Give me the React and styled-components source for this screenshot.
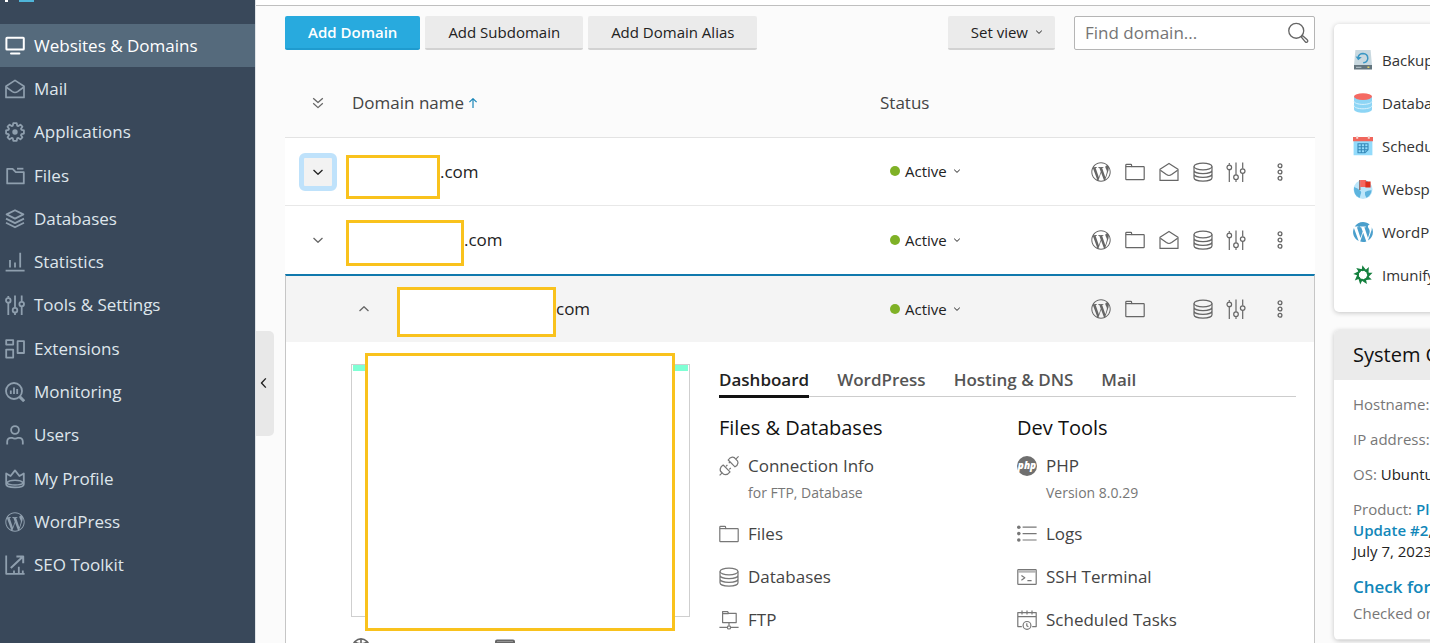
import React from "react";
import styled, { createGlobalStyle, css } from "styled-components";
import { FaWordpressSimple } from "react-icons/fa";

const GlobalStyle = createGlobalStyle`
  *, *::before, *::after { box-sizing: border-box; }
  body {
    margin: 0;
    background: #fbfbfb;
    color: #222;
    font-family: "Open Sans", "Noto Sans", sans-serif;
    font-size: 17px;
    line-height: 20px;
  }
  button, input { font: inherit; color: inherit; }
  button { border: 0; padding: 0; background: none; cursor: pointer; }
  a { color: inherit; text-decoration: none; }
  h2, h3, p, ul { margin: 0; padding: 0; }
  ul { list-style: none; }
  svg { display: block; flex: none; }
`;

/* ---------- icons ---------- */

const Svg = ({ size = 20, stroke = 1.2, children, ...rest }) => (
  <svg
    width={size}
    height={size}
    viewBox="0 0 20 20"
    fill="none"
    stroke="currentColor"
    strokeWidth={stroke}
    strokeLinejoin="round"
    aria-hidden="true"
    {...rest}
  >
    {children}
  </svg>
);

const FlatSvg = ({ children }) => (
  <svg width="20" height="20" viewBox="0 0 20 20" aria-hidden="true">
    {children}
  </svg>
);

const MonitorIcon = () => (
  <Svg stroke="2">
    <rect x="1.4" y="1.8" width="17.4" height="11.8" rx=".6" />
    <path d="M6 17.4h8.4" strokeLinecap="round" />
  </Svg>
);
const MailOpenIcon = ({ bold }) => (
  <Svg stroke={bold ? 1.7 : 1.2}>
    <path d="M1 7.2 10 1.4l9 5.8v11.2H1z" />
    <path d="m1.4 8.2 6 4.4q2.6 1.8 5.2 0l6-4.4" />
  </Svg>
);
const GearIcon = () => (
  <Svg stroke="1.8">
    <path d="M8.3 1.2h3.4l.5 2.4 1.1.5 2.1-1.4 2 2-1.4 2.1.5 1.1 2.4.5v3.2l-2.4.5-.5 1.1 1.4 2.1-2 2-2.1-1.4-1.1.5-.5 2.4H8.3l-.5-2.4-1.1-.5-2.1 1.4-2-2L4 13.2l-.5-1.1-2.4-.5V8.4l2.4-.5L4 6.8 2.6 4.7l2-2 2.1 1.4 1.1-.5z" />
    <circle cx="10" cy="10" r="1.8" fill="currentColor" />
  </Svg>
);
const FilesNavIcon = () => (
  <Svg stroke="1.8">
    <path d="M2.2 17.4V2.8h5.4l3.2 3.4h8v11.2z" />
    <path d="M12 2.7h6.4" />
  </Svg>
);
const LayersIcon = () => (
  <Svg stroke="1.8">
    <path d="m10 1.2 8.4 4.2L10 9.6 1.6 5.4z" />
    <path d="m1 9.6 9 4.5 9-4.5M1 13.8l9 4.5 9-4.5" />
  </Svg>
);
const StatsIcon = () => (
  <Svg stroke="1.8">
    <path d="M.6 18.6h19M5 15.6V8M10 15.6v-5M15.2 15.6V.8" />
  </Svg>
);
const SlidersIcon = ({ bold }) => (
  <Svg stroke={bold ? 1.8 : 1.2}>
    <path d="M3.3 1v1.8M3.3 8v12M10 .6v12.2M10 17.6V20M16.7 .6v6M16.7 11.6V20" />
    <circle cx="3.3" cy="5.4" r="2.3" />
    <circle cx="10" cy="15.2" r="2.3" />
    <circle cx="16.7" cy="9.1" r="2.3" />
  </Svg>
);
const ExtensionsIcon = () => (
  <Svg stroke="1.8">
    <rect x="1.2" y="1.2" width="7" height="4.4" />
    <rect x="1.2" y="10.6" width="7" height="8" />
    <rect x="12.6" y="2.2" width="6.4" height="11.8" />
  </Svg>
);
const MonitoringIcon = () => (
  <Svg stroke="1.8">
    <circle cx="9" cy="9" r="8" />
    <path d="M5.8 12V8.6M9 12V5.4M12.2 12V7" />
    <path d="m14.6 14.6 4.6 4.6" strokeWidth="3" />
  </Svg>
);
const UserIcon = () => (
  <Svg stroke="1.8">
    <circle cx="10" cy="5" r="3.9" />
    <path d="M2.2 19.6v-2.8q0-4 3.8-4h1q3 1.6 6 0h1q3.8 0 3.8 4v2.8" />
  </Svg>
);
const CrownIcon = () => (
  <Svg stroke="1.8">
    <path d="M1.2 4.4 5.6 7 10 1.4 14.4 7l4.4-2.6v10.8q0 3.2-8.8 3.2t-8.8-3.2z" />
    <path d="M1.6 14q2-2.8 8.4-2.8t8.4 2.8q-2 2-8.4 2T1.6 14z" strokeWidth="1.5" />
  </Svg>
);
const SeoIcon = () => (
  <Svg stroke="1.8">
    <path d="M1.2 .6v18.2h18.4" />
    <path d="M5.8 13 18 1.6M11.4 1.4h6.8v6.8" strokeWidth="2" />
    <path d="M9 18.4v-2.8M13.8 18.4v-6.6M17.8 18.4v-3" />
  </Svg>
);
const FolderIcon = () => (
  <Svg>
    <path d="M.8 17V3.2q0-.8.8-.8h4.2q.8 0 .8.8v1.4h12q.6 0 .6.6V17q0 .6-.6.6H1.4q-.6 0-.6-.6z" />
    <path d="M.8 4.6h6" />
  </Svg>
);
const DatabaseIcon = () => (
  <Svg>
    <ellipse cx="10" cy="4.5" rx="9" ry="3.3" />
    <path d="M1 4.5v11.3c0 1.9 4 3.3 9 3.3s9-1.4 9-3.3V4.5M1 8.3c0 1.9 4 3.3 9 3.3s9-1.4 9-3.3M1 12c0 1.9 4 3.3 9 3.3s9-1.4 9-3.3" />
  </Svg>
);
const KebabIcon = () => (
  <Svg stroke="1.3">
    <circle cx="10" cy="3.8" r="1.9" />
    <circle cx="10" cy="10" r="1.9" />
    <circle cx="10" cy="16.2" r="1.9" />
  </Svg>
);
const PlugIcon = () => (
  <Svg>
    <path d="m.6 19.4 2.6-2.6M16.8 3.2 19.6 .4M7 10.4l1.4-1.6M10.2 13.4l1.6-1.4M11 6l-1.2 1.2" />
    <path d="M4.2 9 11 15.8q-2 2.8-4.8 2.8-1.6 0-3-1.8Q.8 15.4 1.2 13q.6-2.6 3-4z" />
    <path d="M9.2 4 16 10.8q2.6-1.4 3-4 .2-2-2.2-3.6Q15.4 1 13.2 1.2 10.8 1.4 9.2 4z" />
  </Svg>
);
const FtpIcon = () => (
  <Svg>
    <path d="M3.6 12.6V1.6h5l1 1.8h7.6v9.2zM3.6 3.6h6M.4 17.4h7.8M11.8 17.4h7.8M10 12.6v3" />
    <circle cx="10" cy="17.4" r="1.6" />
  </Svg>
);
const PhpIcon = () => (
  <FlatSvg>
    <circle cx="10" cy="10" r="10" fill="#6f6f6f" />
    <text
      x="10"
      y="13"
      fill="#fff"
      fontFamily="Open Sans, sans-serif"
      fontSize="10"
      fontWeight="800"
      fontStyle="italic"
      textAnchor="middle"
    >
      php
    </text>
  </FlatSvg>
);
const LogsIcon = () => (
  <Svg>
    <path d="M5.6 3.2h14M5.6 9.6h14M5.6 16h14" />
    <g fill="currentColor" stroke="none">
      <circle cx="1.8" cy="3.2" r="1.8" />
      <circle cx="1.8" cy="9.6" r="1.8" />
      <circle cx="1.8" cy="16" r="1.8" />
    </g>
  </Svg>
);
const TerminalIcon = () => (
  <Svg>
    <rect x=".8" y="2.6" width="18.4" height="14.8" rx=".6" />
    <path d="M1 4.5h18" stroke="#b5b5b5" strokeWidth="2.4" />
    <path d="m4.4 8.4 3.4 2.4-3.4 2.4M10.4 13.6h4.2" />
  </Svg>
);
const TasksIcon = () => (
  <Svg>
    <path d="M4.8 16.6H.8V2.6h18.4v14h-4M.8 6.6h18.4M5 .4v4M10 .4v4M15 .4v4" />
    <circle cx="10" cy="15.4" r="3.9" />
    <path d="M9.8 13.2v2.5l1.6 1" />
  </Svg>
);
const SearchIcon = () => (
  <Svg size={22} stroke="1.2">
    <circle cx="8.4" cy="8" r="6.8" />
    <path d="m12.8 13.4 1.2-1.2 4.4 4q1 1.2 0 2-.9.8-1.8-.2z" />
  </Svg>
);
const Chevron = ({ size = 16, stroke = 1.6, d = "m4.4 7.4 5.6 5.4 5.6-5.4" }) => (
  <Svg size={size} stroke={stroke}>
    <path d={d} />
  </Svg>
);
const UP = "m4.4 12.6 5.6-5.4 5.6 5.4";
const LEFT = "M12.6 3.4 6.4 10l6.2 6.6";
const DOUBLE = "m4 4 6 5.4L16 4M4 10.4l6 5.4 6-5.4";
const SortUpIcon = () => (
  <Svg size={12} stroke="2">
    <path d="M10 18.4V3M4 8.6l6-6 6 6" />
  </Svg>
);
const GlobeIcon = () => (
  <Svg size={18} stroke="1.8">
    <circle cx="10" cy="10" r="9" />
    <path d="M3 4q7 5 14 0M10 1v18" />
  </Svg>
);
const WindowIcon = () => (
  <Svg stroke="2">
    <rect x="1" y="2.6" width="18" height="14" rx="1" />
    <path d="M1 4.6h18" />
  </Svg>
);

const BackupIcon = () => (
  <FlatSvg>
    <path d="M2.4 0h15.2L19 15H1z" fill="#c9d9e0" />
    <path d="M1 15h18v4.6H1z" fill="#63757e" />
    <path d="M3 16.8h5.4v1.2H3z" fill="#a9b7be" />
    <path d="M14.4 16.6h2v1.4h-2z" fill="#e5d26b" />
    <path d="M5 7.6q1-4 5-4 4.6.2 4.8 4.6-.2 4-4.6 4.6" fill="none" stroke="#3a97c4" strokeWidth="1.5" />
    <path d="m2.6 6.4 2.6 3.8 3.6-3z" fill="#3a97c4" />
  </FlatSvg>
);
const DbColorIcon = () => (
  <FlatSvg>
    <path d="M1 3.4v12.8c0 2 4 3.6 9 3.6s9-1.6 9-3.6V3.4z" fill="#8dd5f5" />
    <ellipse cx="10" cy="3.6" rx="9" ry="3.3" fill="#f56a63" />
    <path d="M1 8.2c0 1.8 4 3.2 9 3.2s9-1.4 9-3.2M1 12.6c0 1.8 4 3.2 9 3.2s9-1.4 9-3.2" fill="none" stroke="#d9f2fd" />
  </FlatSvg>
);
const CalendarColorIcon = () => (
  <FlatSvg>
    <path d="M.6 4h18.8v15.2H.6z" fill="#93dbfb" />
    <path d="M0 1h20v4.2H0z" fill="#f0665c" />
    <path d="M3.2 0h2v2.8h-2zM14.8 0h2v2.8h-2z" fill="#f7d8d4" />
    <path d="M5 7.8h10v6l-3 3H5zM8.3 7.8v9M11.7 7.8v9M5 10.8h10M5 13.8h10" fill="none" stroke="#3488b8" strokeWidth="1.1" />
  </FlatSvg>
);
const WebspaceColorIcon = () => (
  <FlatSvg>
    <circle cx="10" cy="10.5" r="9.5" fill="#bce6fa" />
    <path d="M1 8q4 1 6 3.6 2 1.6.6 4-.4 2-1 3.4Q.4 16.6 1 8zM12 13q3-2 6.6-1.8-.6 5.2-5.2 7.6-2-3-1.4-5.8zM8 1.4q4-1 7 1.2l-4 2.4z" fill="#5db4de" />
    <path d="M6.8 1v10" stroke="#8b5a55" strokeWidth="1.2" />
    <path d="M7.2 1H13v7H7.2z" fill="#f5665e" />
    <path d="M12.4 2.4h5.2v6.2h-5.2z" fill="#dc2f1e" />
  </FlatSvg>
);
const WordPressColorIcon = () => (
  <svg width="20" height="20" viewBox="42 42 428 428" aria-hidden="true">
    <path
      fill="#4a9fcc"
      d="M61.7 169.4l101.5 278C92.2 413 43.3 340.2 43.3 256c0-30.9 6.6-60.1 18.4-86.6zm337.9 75.9c0-26.3-9.4-44.5-17.5-58.7-10.8-17.5-20.9-32.4-20.9-49.9 0-19.6 14.8-37.8 35.7-37.8.9 0 1.8.1 2.8.2-37.9-34.7-88.3-55.9-143.7-55.9-74.3 0-139.7 38.1-177.8 95.9 5 .2 9.7.3 13.7.3 22.2 0 56.7-2.7 56.7-2.7 11.5-.7 12.8 16.2 1.4 17.5 0 0-11.5 1.3-24.3 2l77.5 230.4L249.8 247l-33.1-90.8c-11.5-.7-22.3-2-22.3-2-11.5-.7-10.1-18.2 1.3-17.5 0 0 35.1 2.7 56 2.7 22.2 0 56.7-2.7 56.7-2.7 11.5-.7 12.8 16.2 1.4 17.5 0 0-11.5 1.3-24.3 2l76.9 228.7 21.2-70.9c9-29.4 16-50.5 16-68.7zm-139.9 29.3l-63.8 185.5c19.1 5.6 39.2 8.7 60.1 8.7 24.8 0 48.5-4.3 70.6-12.1-.6-.9-1.1-1.9-1.5-2.9l-65.4-179.2zm183-120.7c.9 6.8 1.4 14 1.4 21.9 0 21.6-4 45.8-16.2 76.2l-65 187.9C426.2 403 468.7 334.5 468.7 256c0-37-9.4-71.8-26-102.1z"
    />
  </svg>
);
const ImunifyIcon = () => (
  <FlatSvg>
    <g fill="#15803f">
      {[0, 40, 80, 120, 160, 200, 240, 280, 320].map((a) => (
        <path key={a} transform={`rotate(${a} 10 10)`} d="M9.4 .2 13 5 9.2 6.2 6.6 4.8l2.2-.6z" />
      ))}
    </g>
    <circle cx="10" cy="10" r="5" fill="none" stroke="#15803f" strokeWidth="1.2" />
  </FlatSvg>
);

/* ---------- shell ---------- */

const Shell = styled.div`
  display: flex;
  height: 100vh;
  overflow: hidden;
`;

const Sidebar = styled.nav`
  flex: 0 0 256px;
  background: #39485a;
  border-right: 1px solid #dfe3e7;
`;

const Brand = styled.div`
  height: 24px;
  padding-left: 5px;
`;

const NavList = styled.ul`
  display: grid;
  grid-auto-rows: 1fr;
  min-height: 563px;
`;

const NavLink = styled.a`
  display: flex;
  align-items: center;
  gap: 9px;
  height: 100%;
  padding-left: 5px;
  font-weight: 500;
  color: ${(p) => (p.$active ? "#fff" : "#dfe6ec")};
  background: ${(p) => (p.$active ? "#556a7c" : "transparent")};
  svg { color: ${(p) => (p.$active ? "#fff" : "#8f9fae")}; }
`;

const Content = styled.div`
  position: relative;
  flex: 1;
  min-width: 0;
`;

const TopStrip = styled.div`
  height: 6px;
  background: #fff;
  border-bottom: 1px solid #bfbfbf;
`;

const CollapseHandle = styled.button`
  position: absolute;
  top: 331px;
  left: 0;
  display: grid;
  place-items: center;
  width: 18px;
  height: 105px;
  padding: 0 2px 2px 0;
  border-radius: 0 5px 5px 0;
  background: #e8e8e8;
  color: #222;
`;

const Columns = styled.div`
  display: flex;
  padding: 10px 0 0 29px;
`;

const Main = styled.main`
  flex: 1;
  min-width: 0;
`;

/* ---------- toolbar ---------- */

const Toolbar = styled.div`
  display: flex;
  gap: 5px;
`;

const Button = styled.button`
  display: flex;
  align-items: center;
  gap: 6px;
  height: 34px;
  padding: 0 23px;
  border-radius: 2px;
  font-size: 15px;
  font-weight: 500;
  white-space: nowrap;
  color: #222;
  background: #ebebeb;
  border-bottom: 2px solid #d2d2d2;
`;

const PrimaryButton = styled(Button)`
  font-weight: 600;
  color: #fff;
  background: #28aade;
  border-bottom-color: #1f9bcf;
`;

const ViewButton = styled(Button)`
  margin-left: auto;
  padding-right: 11px;
`;

const SearchBox = styled.label`
  display: flex;
  align-items: center;
  width: 241px;
  height: 34px;
  margin-left: 14px;
  padding: 0 5px 0 10px;
  border: 1px solid #b5b5b5;
  border-radius: 2px;
  background: #fff;
  color: #666;
`;

const SearchInput = styled.input`
  flex: 1;
  min-width: 0;
  padding: 0;
  border: 0;
  outline: 0;
  background: none;
  &::placeholder { color: #757575; opacity: 1; }
`;

/* ---------- domain table ---------- */

const Table = styled.table`
  width: 100%;
  table-layout: fixed;
  border-collapse: separate;
  border-spacing: 0;
`;

const Col = styled.col`
  width: ${(p) => p.$w};
`;

const Th = styled.th`
  height: 88px;
  padding: 0 0 0 ${(p) => p.$indent || "0"};
  border-bottom: 1px solid #e3e3e3;
  font-weight: 400;
  text-align: left;
  vertical-align: top;
  color: #444;
`;

const HeadLabel = styled.span`
  display: flex;
  align-items: center;
  gap: 3px;
  height: 20px;
  margin-top: 43px;
  svg { color: #1a86b8; }
`;

const HeadToggle = styled.button`
  display: block;
  margin-top: 45px;
  color: #666;
`;

const Td = styled.td`
  height: 68px;
  padding: 0 0 0 ${(p) => p.$indent || "0"};
  background: #fff;
  vertical-align: middle;
  ${(p) => p.$line && css`border-bottom: 1px solid #e8e8e8;`}
`;

const OpenRow = styled.tr`
  td {
    border-top: 2px solid #1079ad;
    background: #f4f4f4;
  }
  td:first-child { border-left: 1px solid #c6c6c6; }
  td:last-child { border-right: 1px solid #c6c6c6; }
`;

const RowToggle = styled.button`
  display: grid;
  place-items: center;
  width: 38px;
  height: 38px;
  border-radius: 6px;
  color: #666;
  ${(p) =>
    p.$focused &&
    css`
      border: 5px solid #bfe2fb;
      background: #f2f2f2;
      color: #222;
    `}
`;

const DomainName = styled.div`
  display: flex;
  align-items: center;
  font-weight: 500;
`;

const Mask = styled.span`
  width: ${(p) => p.$w};
  height: ${(p) => p.$h};
  margin-top: ${(p) => p.$drop};
  margin-left: ${(p) => p.$inset || "0"};
  border: 3px solid #f9c21d;
  background: #fff;
`;

const StatusButton = styled.button`
  display: flex;
  align-items: center;
  gap: 5px;
  padding-bottom: 1px;
  font-size: 15px;
  font-weight: 500;
  color: #222;
  &::before {
    content: "";
    width: 10px;
    height: 10px;
    border-radius: 50%;
    background: #7fb126;
  }
`;

const Actions = styled.div`
  display: grid;
  grid-template-columns: 34px 34px 34px 33px 44px 20px;
  color: #666;
`;

const IconButton = styled.button`
  grid-column: ${(p) => p.$col};
  width: 20px;
`;

/* ---------- details ---------- */

const DetailCell = styled.td`
  padding: 0;
  border: solid #c6c6c6;
  border-width: 0 1px;
  background: #fff;
`;

const Detail = styled.div`
  display: flex;
  gap: 29px;
  padding: 22px 18px 0 65px;
`;

const PreviewColumn = styled.div`
  flex: 0 0 339px;
`;

const Preview = styled.div`
  position: relative;
  height: 253px;
  border: 1px solid #cfcfcf;
  &::before {
    content: "";
    display: block;
    height: 6px;
    margin: 0 1px;
    background: #7fffd4;
  }
`;

const PreviewMask = styled.div`
  position: absolute;
  inset: -12px 14px -15px 13px;
  border: 3px solid #f9c21d;
  background: #fff;
`;

const PreviewLinks = styled.div`
  display: flex;
  align-items: flex-start;
  gap: 30px;
  margin-top: 21px;
  padding-left: 1px;
  font-size: 15px;
`;

const PreviewLink = styled.a`
  display: flex;
  gap: 7px;
  color: #1187b9;
  svg { color: #666; }
`;

const DetailBody = styled.div`
  flex: 1;
  min-width: 0;
`;

const Tabs = styled.div`
  display: flex;
  gap: 28px;
  border-bottom: 1px solid #cdcdcd;
`;

const Tab = styled.button`
  height: 34px;
  margin-bottom: -2px;
  border-bottom: 3px solid ${(p) => (p.$active ? "#111" : "transparent")};
  font-weight: 600;
  color: ${(p) => (p.$active ? "#222" : "#555")};
`;

const ToolColumns = styled.div`
  display: grid;
  grid-template-columns: 298px 1fr;
  padding-top: 19px;
`;

const ToolTitle = styled.h3`
  margin-bottom: 16px;
  font-size: 20px;
  font-weight: 500;
  line-height: 24px;
  color: #111;
`;

const ToolList = styled.ul`
  display: grid;
  gap: 23px;
`;

const Tool = styled.a`
  display: grid;
  grid-template-columns: 20px 1fr;
  column-gap: 9px;
  align-items: center;
  color: #444;
  svg { color: #777; }
`;

const ToolNote = styled.span`
  grid-column: 2;
  padding-top: 8px;
  font-size: 14px;
  line-height: 17px;
  color: #777;
`;

/* ---------- right column ---------- */

const Aside = styled.aside`
  flex: 0 0 115px;
  overflow: hidden;
  padding: 8px 0 0 19px;
`;

const Card = styled.section`
  width: 320px;
  margin-bottom: 18px;
  border-radius: 5px;
  overflow: hidden;
  background: #fff;
  box-shadow: 0 1px 5px rgba(0, 0, 0, 0.22);
`;

const ShortcutList = styled.ul`
  display: grid;
  gap: 23px;
  padding: 26px 19px 27px;
`;

const Shortcut = styled.a`
  display: flex;
  align-items: center;
  gap: 9px;
  font-size: 15px;
  color: #333;
`;

const CardTitle = styled.h2`
  padding: 13px 19px;
  background: #ebebeb;
  font-size: 20px;
  font-weight: 500;
  line-height: 24px;
  color: #111;
`;

const Facts = styled.div`
  display: grid;
  gap: 14px;
  padding: 14px 19px 15px;
  border-bottom: 1px solid #e3e3e3;
  font-size: 15px;
  line-height: 21px;
  color: #777;
  a { font-weight: 600; color: #1187b9; }
  b { font-weight: 500; color: #222; }
`;

const UpdateLink = styled.p`
  margin-bottom: 6px;
  font-size: 17px;
`;

/* ---------- data ---------- */

const NAV = [
  ["Websites & Domains", <MonitorIcon />],
  ["Mail", <MailOpenIcon bold />],
  ["Applications", <GearIcon />],
  ["Files", <FilesNavIcon />],
  ["Databases", <LayersIcon />],
  ["Statistics", <StatsIcon />],
  ["Tools & Settings", <SlidersIcon bold />],
  ["Extensions", <ExtensionsIcon />],
  ["Monitoring", <MonitoringIcon />],
  ["Users", <UserIcon />],
  ["My Profile", <CrownIcon />],
  ["WordPress", <FaWordpressSimple size={20} />],
  ["SEO Toolkit", <SeoIcon />],
];

const TOOLS = [
  {
    title: "Files & Databases",
    items: [
      ["Connection Info", <PlugIcon />, "for FTP, Database"],
      ["Files", <FolderIcon />],
      ["Databases", <DatabaseIcon />],
      ["FTP", <FtpIcon />],
    ],
  },
  {
    title: "Dev Tools",
    items: [
      ["PHP", <PhpIcon />, "Version 8.0.29"],
      ["Logs", <LogsIcon />],
      ["SSH Terminal", <TerminalIcon />],
      ["Scheduled Tasks", <TasksIcon />],
    ],
  },
];

const SHORTCUTS = [
  ["Backup Manager", <BackupIcon />],
  ["Databases", <DbColorIcon />],
  ["Scheduled Tasks", <CalendarColorIcon />],
  ["Webspaces", <WebspaceColorIcon />],
  ["WordPress", <WordPressColorIcon />],
  ["Imunify360", <ImunifyIcon />],
];

const Status = () => (
  <StatusButton>
    Active
    <Chevron size={10} stroke={2} />
  </StatusButton>
);

const RowActions = ({ mail = true }) => (
  <Actions>
    <IconButton $col={1} aria-label="WordPress"><FaWordpressSimple size={20} /></IconButton>
    <IconButton $col={2} aria-label="Files"><FolderIcon /></IconButton>
    {mail && <IconButton $col={3} aria-label="Mail"><MailOpenIcon /></IconButton>}
    <IconButton $col={4} aria-label="Databases"><DatabaseIcon /></IconButton>
    <IconButton $col={5} aria-label="Settings"><SlidersIcon /></IconButton>
    <IconButton $col={6} aria-label="More"><KebabIcon /></IconButton>
  </Actions>
);

export default function App() {
  return (
    <>
      <GlobalStyle />
      <Shell>
        <Sidebar>
          <Brand>
            <svg width="30" height="2" aria-hidden="true">
              <path d="M0 0h3v2H0z" fill="#fff" />
              <path d="M14 0h15v2H14z" fill="#4fb5d9" />
            </svg>
          </Brand>
          <NavList>
            {NAV.map(([label, icon], i) => (
              <li key={label}>
                <NavLink href="#" $active={i === 0}>{icon}{label}</NavLink>
              </li>
            ))}
          </NavList>
        </Sidebar>

        <Content>
          <TopStrip />
          <CollapseHandle aria-label="Collapse menu">
            <Chevron size={14} stroke={2} d={LEFT} />
          </CollapseHandle>
          <Columns>
            <Main>
              <Toolbar>
                <PrimaryButton>Add Domain</PrimaryButton>
                <Button>Add Subdomain</Button>
                <Button>Add Domain Alias</Button>
                <ViewButton>Set view <Chevron size={10} stroke={2} /></ViewButton>
                <SearchBox>
                  <SearchInput placeholder="Find domain..." aria-label="Find domain" />
                  <SearchIcon />
                </SearchBox>
              </Toolbar>

              <Table>
                <colgroup>
                  <Col $w="61px" />
                  <Col />
                  <Col $w="211px" />
                  <Col $w="224px" />
                </colgroup>
                <thead>
                  <tr>
                    <Th $indent="25px">
                      <HeadToggle aria-label="Expand all"><Chevron d={DOUBLE} /></HeadToggle>
                    </Th>
                    <Th $indent="6px"><HeadLabel>Domain name <SortUpIcon /></HeadLabel></Th>
                    <Th><HeadLabel>Status</HeadLabel></Th>
                    <Th />
                  </tr>
                </thead>
                <tbody>
                  <tr>
                    <Td $line $indent="14px">
                      <RowToggle $focused aria-label="Expand"><Chevron /></RowToggle>
                    </Td>
                    <Td $line><DomainName><Mask $w="94px" $h="44px" $drop="10px" />.com</DomainName></Td>
                    <Td $line $indent="10px"><Status /></Td>
                    <Td $line><RowActions /></Td>
                  </tr>
                  <tr>
                    <Td $indent="14px"><RowToggle aria-label="Expand"><Chevron /></RowToggle></Td>
                    <Td><DomainName><Mask $w="118px" $h="46px" $drop="6px" />.com</DomainName></Td>
                    <Td $indent="10px"><Status /></Td>
                    <Td><RowActions /></Td>
                  </tr>
                  <OpenRow>
                    <Td $indent="59px" colSpan={2}>
                      <DomainName>
                        <RowToggle aria-label="Collapse"><Chevron d={UP} /></RowToggle>
                        <Mask $w="159px" $h="50px" $drop="6px" $inset="14px" />com
                      </DomainName>
                    </Td>
                    <Td $indent="10px"><Status /></Td>
                    <Td><RowActions mail={false} /></Td>
                  </OpenRow>
                  <tr>
                    <DetailCell colSpan={4}>
                      <Detail>
                        <PreviewColumn>
                          <Preview><PreviewMask /></Preview>
                          <PreviewLinks>
                            <PreviewLink href="#"><GlobeIcon />Open in web</PreviewLink>
                            <PreviewLink href="#"><WindowIcon />Preview</PreviewLink>
                          </PreviewLinks>
                        </PreviewColumn>
                        <DetailBody>
                          <Tabs>
                            {["Dashboard", "WordPress", "Hosting & DNS", "Mail"].map((t, i) => (
                              <Tab key={t} $active={i === 0}>{t}</Tab>
                            ))}
                          </Tabs>
                          <ToolColumns>
                            {TOOLS.map((group) => (
                              <div key={group.title}>
                                <ToolTitle>{group.title}</ToolTitle>
                                <ToolList>
                                  {group.items.map(([label, icon, note]) => (
                                    <li key={label}>
                                      <Tool href="#">
                                        {icon}
                                        {label}
                                        {note && <ToolNote>{note}</ToolNote>}
                                      </Tool>
                                    </li>
                                  ))}
                                </ToolList>
                              </div>
                            ))}
                          </ToolColumns>
                        </DetailBody>
                      </Detail>
                    </DetailCell>
                  </tr>
                </tbody>
              </Table>
            </Main>

            <Aside>
              <Card>
                <ShortcutList>
                  {SHORTCUTS.map(([label, icon]) => (
                    <li key={label}><Shortcut href="#">{icon}{label}</Shortcut></li>
                  ))}
                </ShortcutList>
              </Card>
              <Card>
                <CardTitle>System Overview</CardTitle>
                <Facts>
                  <p>Hostname:</p>
                  <p>IP address:</p>
                  <p>OS: <b>Ubuntu</b></p>
                  <p>
                    Product: <a href="#">Plesk<br />Update #2</a><b>,<br />July 7, 2023</b>
                  </p>
                  <div>
                    <UpdateLink><a href="#">Check for updates</a></UpdateLink>
                    <p>Checked on</p>
                  </div>
                </Facts>
              </Card>
            </Aside>
          </Columns>
        </Content>
      </Shell>
    </>
  );
}
